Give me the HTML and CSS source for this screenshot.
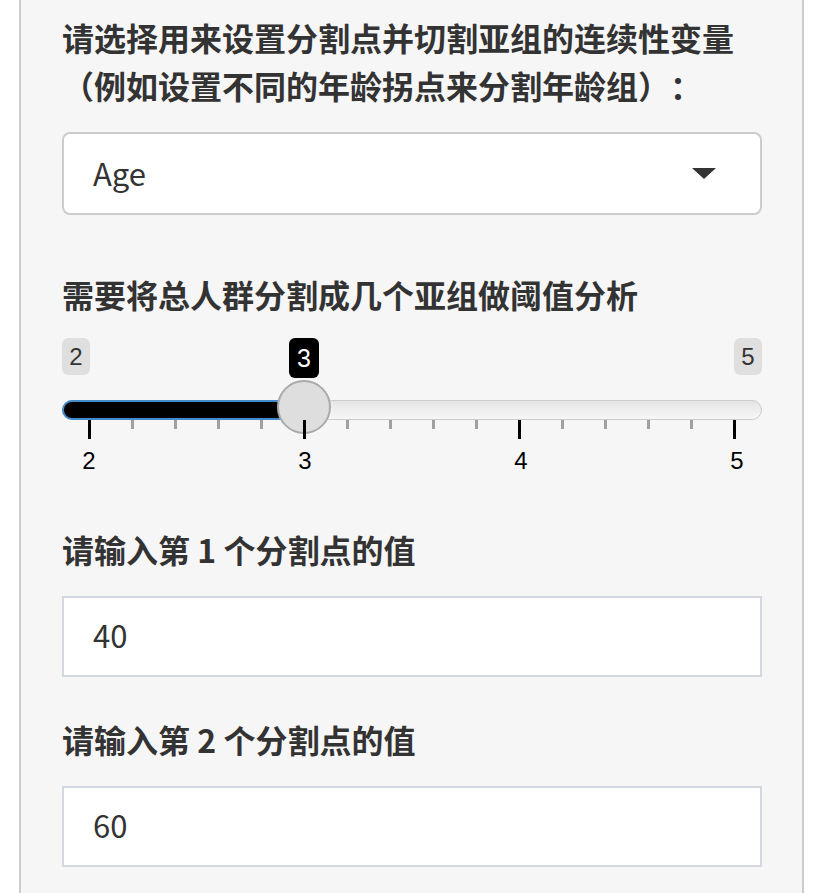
FILE: index.html
```html
<!DOCTYPE html>
<html lang="zh">
<head>
<meta charset="utf-8">
<link rel="stylesheet" href="styles.css">
</head>
<body>
<div class="panel">
  <label class="lbl lbl-first">请选择用来设置分割点并切割亚组的连续性变量（例如设置不同的年龄拐点来分割年龄组）：</label>
  <div class="select">
    <span class="select-text">Age</span>
    <span class="caret"></span>
  </div>

  <label class="lbl lbl-slider">需要将总人群分割成几个亚组做阈值分析</label>
  <div class="slider">
    <span class="irs-min">2</span>
    <span class="irs-max">5</span>
    <div class="irs-line"></div>
    <div class="irs-bar"></div>
    <div class="irs-handle"></div>
    <span class="irs-single">3</span>
    <div class="irs-grid">
      <span class="tick major"></span><span class="tick"></span><span class="tick"></span><span class="tick"></span><span class="tick"></span>
      <span class="tick major"></span><span class="tick"></span><span class="tick"></span><span class="tick"></span><span class="tick"></span>
      <span class="tick major"></span><span class="tick"></span><span class="tick"></span><span class="tick"></span><span class="tick"></span>
      <span class="tick major"></span>
      <span class="grid-text g0">2</span>
      <span class="grid-text g1">3</span>
      <span class="grid-text g2">4</span>
      <span class="grid-text g3">5</span>
    </div>
  </div>

  <label class="lbl lbl-num">请输入第 1 个分割点的值</label>
  <div class="input">40</div>

  <label class="lbl lbl-num2">请输入第 2 个分割点的值</label>
  <div class="input">60</div>
</div>
</body>
</html>
```

FILE: styles.css
```css
html, body {
  margin: 0;
  padding: 0;
  background: #ffffff;
}
body {
  width: 827px;
  height: 893px;
  overflow: hidden;
}
.panel {
  margin-left: 19px;
  width: 785px;
  height: 893px;
  box-sizing: border-box;
  overflow: hidden;
  background: #f6f6f6;
  border-left: 2px solid #cccccc;
  border-right: 2px solid #cccccc;
  padding: 13px 40px 0 41px;
  display: flex;
  flex-direction: column;
  font-family: "Noto Sans CJK SC", "Noto Sans", sans-serif;
  color: #333333;
  text-spacing-trim: space-all;
}
.panel > * {
  flex-shrink: 0;
}
.lbl {
  display: block;
  font-size: 32px;
  line-height: 48px;
  font-weight: 700;
  color: #333333;
  margin-bottom: 23px;
}
.lbl-first {
  margin-right: -10px;
}
.select {
  height: 83px;
  box-sizing: border-box;
  border: 2px solid #cccccc;
  border-radius: 8px;
  background: #ffffff;
  display: flex;
  align-items: center;
  justify-content: space-between;
  padding: 0 44px 0 29px;
  margin-bottom: 55px;
}
.select-text {
  font-size: 31px;
  color: #333333;
  line-height: 1;
  margin-bottom: 3px;
}
.caret {
  width: 0;
  height: 0;
  border-left: 12px solid transparent;
  border-right: 12px solid transparent;
  border-top: 11px solid #333333;
}
.lbl-slider {
  margin-bottom: 20px;
}
.slider {
  position: relative;
  height: 140px;
  margin-bottom: 47px;
  font-family: "Liberation Sans", Arial, sans-serif;
}
.irs-min, .irs-max {
  position: absolute;
  top: 0;
  width: 28px;
  height: 37px;
  border-radius: 6px;
  background: rgba(0, 0, 0, 0.09);
  color: #333333;
  font-size: 24px;
  line-height: 37px;
  text-align: center;
}
.irs-min { left: 0; }
.irs-max { right: 0; }
.irs-single {
  position: absolute;
  top: 0;
  left: 227px;
  width: 30px;
  height: 40px;
  border-radius: 6px;
  background: #000000;
  color: #ffffff;
  font-size: 25px;
  line-height: 40px;
  text-align: center;
}
.irs-line {
  position: absolute;
  left: 0;
  right: 0;
  top: 62px;
  height: 20px;
  box-sizing: border-box;
  border: 1.5px solid #cccccc;
  border-radius: 10px;
  background: linear-gradient(to bottom, #dddddd -50%, #ffffff 150%);
}
.irs-bar {
  position: absolute;
  left: 0;
  width: 250px;
  top: 62px;
  height: 20px;
  box-sizing: border-box;
  border: 2px solid #428bca;
  border-right: none;
  border-radius: 10px 0 0 10px;
  background: #000000;
}
.irs-handle {
  position: absolute;
  left: 215px;
  top: 42px;
  width: 54px;
  height: 54px;
  box-sizing: border-box;
  border-radius: 50%;
  border: 2px solid #aaaaaa;
  background: #dedede;
  box-shadow: 1px 1px 3px rgba(255, 255, 255, 0.3);
}
.irs-grid {
  position: absolute;
  left: 26px;
  width: 648px;
  top: 82px;
  height: 58px;
  display: flex;
  justify-content: space-between;
  align-items: flex-start;
}
.tick {
  width: 2.5px;
  height: 9px;
  background: #a0a0a0;
}
.tick.major {
  width: 2.5px;
  height: 19px;
  background: #000000;
}
.grid-text {
  position: absolute;
  top: 27px;
  width: 40px;
  margin-left: -19px;
  text-align: center;
  font-size: 24px;
  line-height: 28px;
  color: #000000;
}
.g0 { left: 0; }
.g1 { left: 33.333%; }
.g2 { left: 66.667%; }
.g3 { left: 100%; }
.input {
  height: 81px;
  box-sizing: border-box;
  border: 2px solid #d3d7df;
  background: #ffffff;
  display: flex;
  align-items: center;
  padding-left: 29px;
  padding-bottom: 4px;
  font-size: 31px;
  color: #333333;
  margin-bottom: 38px;
}
```
